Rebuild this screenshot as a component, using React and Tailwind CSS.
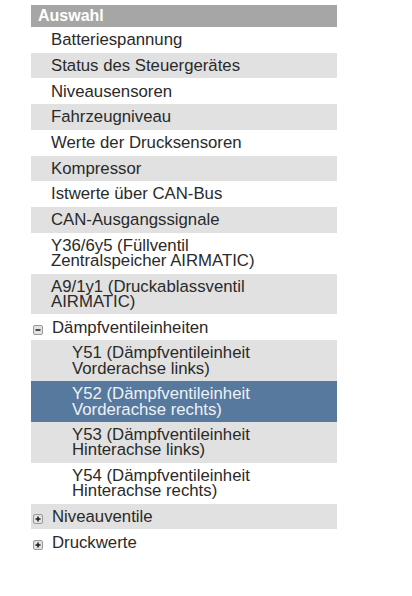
import React from 'react';

const items = [
    { label: ['Batteriespannung'] },
    { label: ['Status des Steuergerätes'] },
    { label: ['Niveausensoren'] },
    { label: ['Fahrzeugniveau'] },
    { label: ['Werte der Drucksensoren'] },
    { label: ['Kompressor'] },
    { label: ['Istwerte über CAN-Bus'] },
    { label: ['CAN-Ausgangssignale'] },
    { label: ['Y36/6y5 (Füllventil', 'Zentralspeicher AIRMATIC)'] },
    { label: ['A9/1y1 (Druckablassventil', 'AIRMATIC)'] },
    { label: ['Dämpfventileinheiten'], toggle: 'minus' },
    { label: ['Y51 (Dämpfventileinheit', 'Vorderachse links)'], child: true },
    { label: ['Y52 (Dämpfventileinheit', 'Vorderachse rechts)'], child: true, selected: true },
    { label: ['Y53 (Dämpfventileinheit', 'Hinterachse links)'], child: true },
    { label: ['Y54 (Dämpfventileinheit', 'Hinterachse rechts)'], child: true },
    { label: ['Niveauventile'], toggle: 'plus' },
    { label: ['Druckwerte'], toggle: 'plus' },
];

function Toggle({ type }) {
    return (
        <span className="mr-[9px] mt-[5px] flex h-[10px] w-[10px] shrink-0 items-center justify-center rounded-[2px] border border-[#9a9a9a] bg-[#e2e2e2]">
            <svg width="6" height="6" viewBox="0 0 6 6">
                <path d="M0.5 3h5" stroke="#1a1a1a" strokeWidth="1.5" />
                {type === 'plus' && <path d="M3 0.5v5" stroke="#1a1a1a" strokeWidth="1.5" />}
            </svg>
        </span>
    );
}

function App() {
    return (
        <div className="min-h-[596px] w-[412px] bg-white pt-[5px] pl-[31px]" style={{ fontFamily: '"Liberation Sans", Arial, sans-serif' }}>
            <div className="w-[306px]">
                <div className="h-[22px] bg-[#a6a6a6] pl-[7px] text-[16px] leading-[22px] font-bold text-white">
                    Auswahl
                </div>
                {items.map((item, i) => {
                    const bg = item.selected ? 'bg-[#57799e] text-[#eef2f7]' : i % 2 === 1 ? 'bg-[#e1e1e1] text-[#2a2a2a]' : 'bg-white text-[#2a2a2a]';
                    const pad = item.toggle ? 'pl-[2px]' : item.child ? 'pl-[41px]' : 'pl-[20px]';
                    return (
                        <div key={i} className={`flex py-[5.25px] pr-4 text-[16.75px] leading-[15.2px] ${bg} ${pad}`}>
                            {item.toggle && <Toggle type={item.toggle} />}
                            <div>
                                {item.label.map((line, j) => (
                                    <div key={j} className="whitespace-nowrap">{line}</div>
                                ))}
                            </div>
                        </div>
                    );
                })}
            </div>
        </div>
    );
}

export default App;
